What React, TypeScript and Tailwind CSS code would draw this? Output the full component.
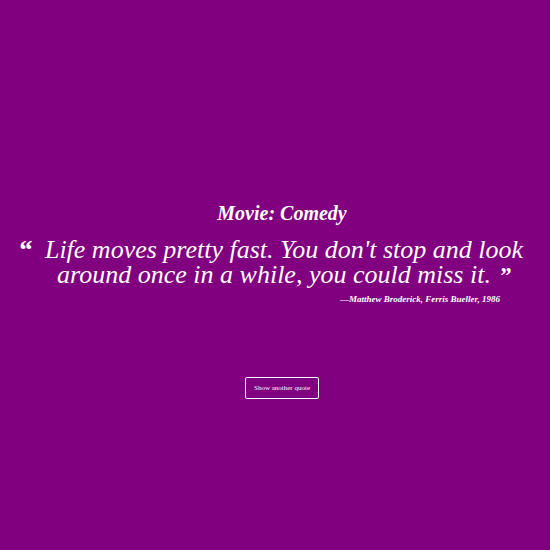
import React from "react";

const App = () => {
  return (
    <div className="min-h-[550px] w-full bg-[#800080] text-white flex flex-col items-center font-['Liberation_Serif',serif]">
      <div className="mt-[200px] w-[506px] self-start ml-[18px] flex flex-col">
        <h1 className="text-[20px] leading-[26px] font-bold italic text-center pl-[22px]">Movie: Comedy</h1>
        <div className="mt-[11px] flex">
          <span className="w-[26px] shrink-0 text-[28px] leading-[25px] font-bold italic">&ldquo;</span>
          <p className="flex-1 text-[26px] leading-[25px] italic text-center">
            Life moves pretty fast. You don't stop and look around once in a while, you could miss it.
            <span className="font-bold text-[24px] ml-[8px]">&rdquo;</span>
          </p>
        </div>
        <div className="pr-[24px] mt-[5px] text-right text-[9px] leading-[12px] font-bold italic">
          &mdash;Matthew Broderick, Ferris Bueller, 1986
        </div>
      </div>
      <button className="mt-[72px] ml-[14px] border border-white rounded-[2px] px-[8px] h-[22px] text-[7px] leading-none">
        Show another quote
      </button>
    </div>
  );
};

export default App;
